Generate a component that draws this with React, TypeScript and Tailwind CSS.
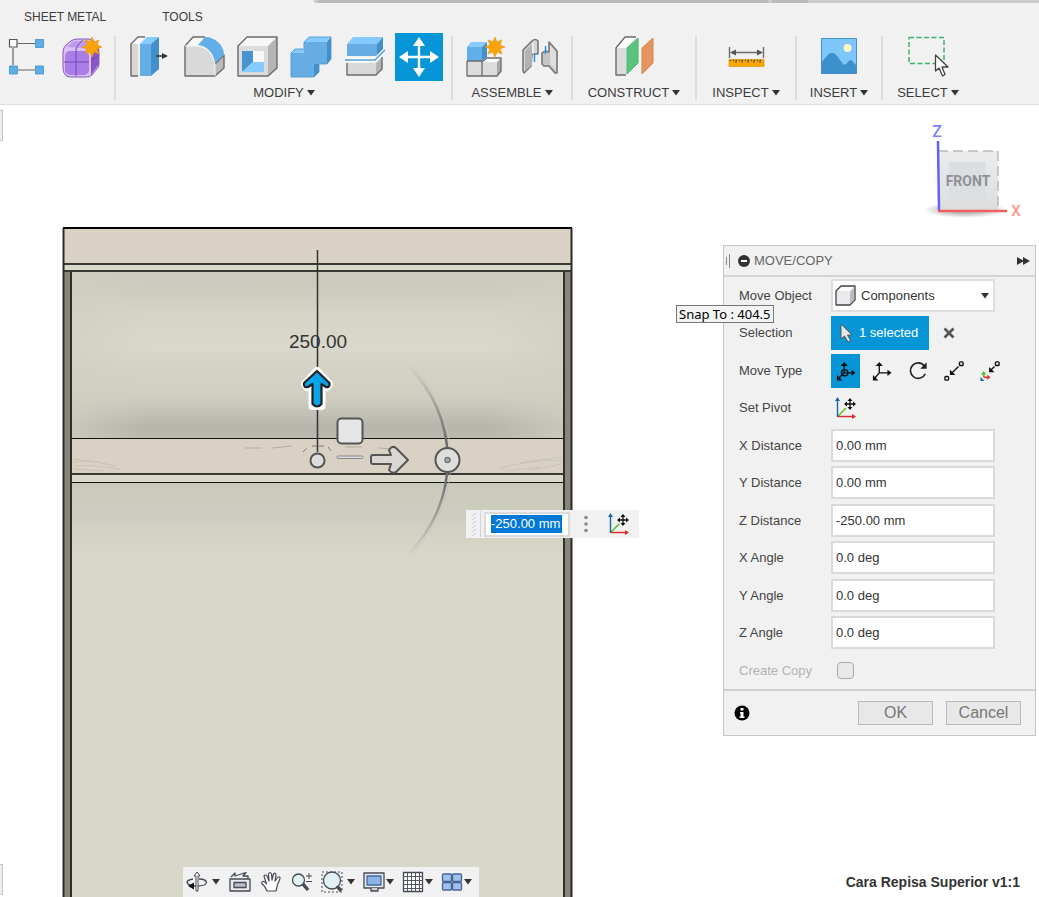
import type { ReactNode } from 'react'

const GREY = '#6b6b6b'

function Tool({ label, active, children }: { label: string; active?: boolean; children: ReactNode }) {
  return (
    <button
      type="button"
      aria-label={label}
      className={active ? 'size-12 bg-[#0696d7]' : 'size-12'}
    >
      <svg viewBox="0 0 48 48" className="size-12" fill="none" strokeLinejoin="round">
        {children}
      </svg>
    </button>
  )
}

function Caret() {
  return (
    <svg viewBox="0 0 8 6" className="h-[6px] w-2 shrink-0" fill="#333">
      <path d="M0 0H8L4 5.5Z" />
    </svg>
  )
}

function Star() {
  return (
    <path
      d="M34 4L36 9L41 7L39 12L44 14L39 16L41 21L36 19L34 24L32 19L27 21L29 16L24 14L29 12L27 7L32 9Z"
      fill="#f9a30a"
      stroke="#e8920a"
      strokeWidth=".6"
    />
  )
}

function Group({ label, className, children }: { label?: string; className: string; children: ReactNode }) {
  return (
    <section className={`flex shrink-0 flex-col gap-1 ${className}`}>
      <div className="flex gap-[6px]">{children}</div>
      {label && (
        <button type="button" className="flex h-4 items-center gap-[3px] text-[13px] leading-4">
          {label}
          <Caret />
        </button>
      )}
    </section>
  )
}

function Divider() {
  return <div className="mt-[3px] h-16 w-[2px] shrink-0 bg-[#dcdcdc]" />
}

function Toolbar() {
  return (
    <header className="shrink-0 border-b border-[#dedede] bg-[#f1f1f1] text-[#3c3c3c]">
      <div className="ml-[314px] flex h-[3px] bg-[#cbcbcb]">
        <div className="ml-1 w-[450px] bg-[#b9b9b9]" />
        <div className="ml-1 w-9 bg-[#b9b9b9]" />
      </div>
      <nav className="flex h-7 items-center gap-14 pl-6 text-[12px]">
        <a href="#sheet-metal">SHEET METAL</a>
        <a href="#tools">TOOLS</a>
      </nav>
      <div className="flex overflow-hidden pt-[2px] pb-[3px]">
        <Group className="w-[114px] items-start pl-[2px]">
          <Tool label="Pattern">
            <path d="M16 10.500H33M11 15V32M16 37H33" stroke="#666" strokeWidth="1.200" />
            <rect x="7.500" y="6.500" width="7.500" height="7.500" fill="#fff" stroke="#555" strokeWidth="1.200" />
            <g fill="#5eaee8" stroke="#3d8fce" strokeWidth=".8">
              <rect x="33.500" y="6.500" width="8" height="8" />
              <rect x="7.500" y="33" width="8" height="8" />
              <rect x="33.500" y="33" width="8" height="8" />
            </g>
          </Tool>
          <Tool label="Create form">
            <path d="M7 19Q7 15 10 12L15 8Q17 6 22 6H33Q43 8 43 20V31Q43 34 40 37L36 42Q34 44 30 44H14Q7 43 7 35Z" fill="#d9c0f5" stroke="#8558bd" />
            <path d="M35 19L43 12V31L35 42Z" fill="#8a55c4" />
            <rect x="9" y="18" width="24" height="24" rx="5" fill="#aa7de8" />
            <path d="M11 14L18 8H33L28 15Z" fill="#bf98f0" />
            <path d="M8 29H33L43 22M20 43V17Q20 13 27 7" stroke="#7346ad" />
            <path d="M34 18V42" stroke="#d9c0f5" strokeWidth="2" />
            <g transform="translate(2 0)">
              <Star />
            </g>
          </Tool>
        </Group>
        <Divider />
        <Group label="MODIFY" className="items-center pr-2 pl-[9px]">
          <Tool label="Press pull">
            <path d="M6 11L13 4H19L13 11Z" fill="#fff" />
            <rect x="6" y="11" width="7" height="32" fill="#d7d7d7" />
            <path d="M13 43H6V11L13 4H20" stroke={GREY} strokeWidth="1.400" />
            <path d="M15 11H26V43H15Z" fill="#64aee5" />
            <path d="M15 11L22 4H34L26 11Z" fill="#86cbff" />
            <path d="M26 11L34 4V36L26 43Z" fill="#4390cc" />
            <path d="M31 23H38" stroke="#333" strokeWidth="1.500" />
            <path d="M37 20L43 23L37 26Z" fill="#333" />
          </Tool>
          <Tool label="Fillet">
            <path d="M6 13L14 4H26L19 13Z" fill="#f7f7f7" />
            <path d="M6 13H18C28 14 35 22 36 32V43H6Z" fill="#d9d9d9" />
            <path d="M36 31L45 22V35L36 43Z" fill="#bbb" />
            <path d="M26 4H14L6 13V43H36L45 35V22L36 31" stroke={GREY} strokeWidth="1.400" />
            <path d="M6 13H18C28 14 35 22 36 32V43" stroke="#f4f4f4" strokeWidth="1" />
            <path d="M19 12L26 4C36 4 45 12 45 22L36 30C35 20 28 13 19 12Z" fill="#62aee8" />
          </Tool>
          <Tool label="Shell">
            <path d="M5 13L14 4H44L35 13Z" fill="#f7f7f7" />
            <path d="M5 13H35V43H5Z" fill="#dcdcdc" />
            <path d="M35 13L44 4V35L35 43Z" fill="#b5b5b5" />
            <path d="M5 13L14 4H44V35L35 43H5Z" stroke={GREY} strokeWidth="1.400" />
            <rect x="9" y="18" width="22" height="21" fill="#f7f7f7" />
            <path d="M9 18H20V29L9 39Z" fill="#4595d0" />
            <path d="M9 39L20 29H31V39Z" fill="#86cbff" />
          </Tool>
          <Tool label="Combine">
            <path d="M4 20H17V9H40V31H27V44H4Z" fill="#65ade3" />
            <path d="M17 9L22 4H44L40 9ZM4 20L8 16H17V20Z" fill="#86cbff" />
            <path d="M40 9L44 4V26L40 31ZM27 31H32V39L27 44Z" fill="#438fc9" />
            <path d="M4 20L8 16H17V9L22 4H44V26L40 31H32V39L27 44H4Z" stroke="#4794cf" strokeWidth=".8" />
          </Tool>
          <Tool label="Split body">
            <path d="M6 11H36V23H6Z" fill="#65ade3" />
            <path d="M6 11L12 4H42L36 11Z" fill="#86cbff" />
            <path d="M36 11L42 4V17L36 23Z" fill="#438fc9" />
            <path d="M6 30H35V42H6Z" fill="#d9d9d9" />
            <path d="M35 30L41 24V36L35 42Z" fill="#b5b5b5" />
            <path d="M6 30V42H35L41 36V24" stroke={GREY} strokeWidth="1.400" />
            <path d="M4 27H34L44 17" stroke="#fff" strokeWidth="4" />
            <path d="M4 27H34L44 17" stroke="#4f9edb" strokeWidth="1.600" />
          </Tool>
          <Tool label="Move/Copy" active>
            <path d="M24 10V38M10 24H38" stroke="#fff" strokeWidth="2.400" />
            <path d="M24 4L30 13H18ZM24 44L18 35H30ZM4 24L13 18V30ZM44 24L35 30V18Z" fill="#fff" />
          </Tool>
        </Group>
        <Divider />
        <Group label="ASSEMBLE" className="w-[118px] items-center">
          <Tool label="New component">
            <path d="M6 14H21V28H6Z" fill="#62aee8" />
            <path d="M6 14L10 9H26L21 14Z" fill="#86cbff" />
            <path d="M21 14L26 9V24L21 28Z" fill="#438fc9" />
            <path d="M6 28H36V43H6Z" fill="#dcdcdc" />
            <path d="M21 29L26 25H40L36 29Z" fill="#fff" />
            <path d="M36 29L40 25V38L36 43Z" fill="#aaa" />
            <path d="M6 28V43H36L40 38V25H26L21 29V43M6 28H21" stroke={GREY} strokeWidth="1.300" />
            <path d="M34 4L38 7L44 14L38 21L34 24L30 21L26 14L30 7Z" fill="#f1f1f1" stroke="#f1f1f1" />
            <Star />
          </Tool>
          <Tool label="Joint">
            <path d="M8 17L17 8Q20 5 23 8V21H17L16 33L9 40L8 38Z" fill="#d4d4d4" stroke="#777" strokeWidth="1.600" />
            <path d="M10 18L17 11V32L10 38Z" fill="#b2b2b2" />
            <path d="M18 10V21" stroke="#fff" />
            <path d="M34 9L42 18V40L40 40L34 33H29L27 31V20Q30 17 34 19Z" fill="#c6c6c6" stroke="#777" strokeWidth="1.600" />
            <path d="M35 12L41 19V37L35 31Z" fill="#dedede" />
            <path d="M19.500 21V29M30.500 13V21" stroke="#178fe0" strokeWidth="1.400" />
          </Tool>
        </Group>
        <Divider />
        <Group label="CONSTRUCT" className="w-[122px] items-center">
          <Tool label="Offset plane">
            <path d="M6 15L15 4H26L16 15Z" fill="#fff" />
            <path d="M6 15H16V42H6Z" fill="#dcdcdc" />
            <path d="M16 42H6V15L15 4H26" stroke={GREY} strokeWidth="1.400" />
            <path d="M17 15L28 5V30L17 41Z" fill="#5bc47c" stroke="#44b369" />
            <path d="M32 15L43 5V30L32 41Z" fill="#e59660" stroke="#d98347" />
          </Tool>
        </Group>
        <Divider />
        <Group label="INSPECT" className="w-[98px] items-center">
          <Tool label="Measure">
            <path d="M7.500 14V25M41.500 14V25M10 19.500H39" stroke={GREY} strokeWidth="1.400" />
            <path d="M8 19.500L14 16.500V22.500ZM41 19.500L35 16.500V22.500Z" fill="#555" />
            <rect x="7" y="26.500" width="35" height="7" fill="#f9a602" stroke="#e29a10" strokeWidth=".8" />
            <path d="M8 27.500H41" stroke="#5c4a20" strokeWidth="1.600" strokeDasharray="1 2" />
            <path d="M14 27V30M20 27V30M26 27V30M32 27V30M38 27V30" stroke="#5c4a20" />
          </Tool>
        </Group>
        <Divider />
        <Group label="INSERT" className="w-[84px] items-center">
          <Tool label="Insert image">
            <rect x="6" y="5" width="36" height="36" fill="#7fc7fb" />
            <path d="M6 29Q9 27 11 24Q17 16 22 23L28 31Q30 33 32 30Q36 24 39 30L42 33V41H6Z" fill="#3d90cc" />
            <rect x="6.500" y="5.500" width="35" height="35" stroke="#4191cc" />
            <circle cx="32.500" cy="15" r="4" fill="#fff7c4" />
          </Tool>
        </Group>
        <Divider />
        <Group label="SELECT" className="w-[90px] items-center">
          <Tool label="Select window">
            <rect x="5" y="4.500" width="35" height="26" stroke="#3bb46b" strokeWidth="1.500" strokeDasharray="5 2.500" />
            <path d="M31.500 22V38L35 35L38.500 43L41 41.500L38 34H44Z" fill="#fff" stroke="#444" strokeWidth="1.300" />
          </Tool>
        </Group>
      </div>
    </header>
  )
}

// Cabinet front with the move manipulator. Coordinates count from the window's top edge.
function Model() {
  return (
    <svg className="block h-full w-full" fill="none">
      <defs>
        <linearGradient id="back" x1="0" y1="272" x2="0" y2="438" gradientUnits="userSpaceOnUse">
          <stop offset="0" stopColor="#cac9bd" />
          <stop offset=".14" stopColor="#cecdc0" />
          <stop offset=".25" stopColor="#d5d4c7" />
          <stop offset=".45" stopColor="#d9d8ca" />
          <stop offset=".6" stopColor="#d3d2c5" />
          <stop offset=".75" stopColor="#cfcec1" />
          <stop offset=".86" stopColor="#c2c0b5" />
          <stop offset=".93" stopColor="#b7b4ac" />
          <stop offset="1" stopColor="#bbb8af" />
        </linearGradient>
        <linearGradient id="door" x1="0" y1="482" x2="0" y2="562" gradientUnits="userSpaceOnUse">
          <stop offset="0" stopColor="#c9c9bb" />
          <stop offset=".4" stopColor="#cdccc0" />
          <stop offset=".7" stopColor="#d4d3c6" />
          <stop offset="1" stopColor="#d9d7ca" />
        </linearGradient>
        <linearGradient id="edges" x1="72" y1="0" x2="563" y2="0" gradientUnits="userSpaceOnUse">
          <stop offset="0" stopColor="#d0cfc2" stopOpacity=".7" />
          <stop offset=".15" stopColor="#d0cfc2" stopOpacity="0" />
          <stop offset=".85" stopColor="#d0cfc2" stopOpacity="0" />
          <stop offset="1" stopColor="#d0cfc2" stopOpacity=".7" />
        </linearGradient>
        <linearGradient id="arc" x1="0" y1="365" x2="0" y2="556" gradientUnits="userSpaceOnUse">
          <stop offset="0" stopColor="#888" stopOpacity="0" />
          <stop offset=".4" stopColor="#6c6c6c" />
          <stop offset=".6" stopColor="#6c6c6c" />
          <stop offset="1" stopColor="#888" stopOpacity="0" />
        </linearGradient>
      </defs>
      <g transform="translate(0 -105)">
        <rect x="63" y="228" width="509" height="1200" fill="#88857a" />
        <rect x="63" y="228" width="509" height="36" fill="#dad3c5" />
        <rect x="63" y="265" width="509" height="6" fill="#d8dacb" />
        <rect x="72" y="272" width="492" height="167" fill="url(#back)" />
        <rect x="72" y="272" width="492" height="167" fill="url(#edges)" />
        <rect x="72" y="439" width="492" height="35" fill="#d9d2c4" />
        <rect x="72" y="475" width="492" height="7" fill="#d9dacb" />
        <rect x="72" y="483" width="492" height="1000" fill="url(#door)" />
        <path
          d="M73 462Q90 459 115 466M75 466Q96 464 122 470M73 459L100 462M73 469L104 471M500 468Q530 460 562 460M520 463L562 457M530 470L562 464M505 471L540 467"
          stroke="#c9c4b4"
        />
        <path d="M245 448H262M272 448L292 446M345 447H362M378 448L392 449" stroke="#b3ae9f" />
        <path d="M63 228H572" stroke="#000" strokeWidth="2" />
        <path d="M63 264H572M63 271H572M72 474H564" stroke="#3a3a34" strokeWidth="2" />
        <path d="M72 438.500H564M72 482.500H564" stroke="#111" />
        <path d="M63.500 228V1500M571.500 228V1500" stroke="#2b2b29" strokeWidth="2" />
        <path d="M71 271V1500M564 271V1500" stroke="#30302b" strokeWidth="2" />

        <path d="M317.500 250V452" stroke="#333" strokeWidth="1.500" />
        <text x="318" y="348" textAnchor="middle" fontSize="19" fill="#333" fontFamily="Liberation Sans, sans-serif">250.00</text>
        <path d="M408 366A131 131 0 0 1 408 554" stroke="url(#arc)" strokeWidth="2.500" />
        <path d="M411 366A131 131 0 0 1 411 554" stroke="#c3c2bb" strokeWidth="1" strokeOpacity=".7" />
        <g strokeLinejoin="round" strokeLinecap="round">
          <path d="M317 371L329 384L327 387L321.500 384V406H312.500V384L307 387L305 384Z" stroke="#fff" strokeWidth="8" fill="#fff" />
          <path d="M317 371L329.500 383Q330 388 326 387L321.500 384V404Q317 409 312.500 404V384L308 387Q303 388 304 383Z" fill="#06a4ea" stroke="#222" strokeWidth="2.200" />
          <rect x="337.500" y="418.500" width="25" height="25" rx="4" fill="#e5e6e8" stroke="#555" strokeWidth="2" />
          <path d="M371 457Q371 455 373 455H391L389 450Q392 445 396 448L408 460L396 472Q392 474 389 470L391 464H373Q371 464 371 462Z" fill="#d8d7d4" stroke="#555" strokeWidth="2" />
        </g>
        <rect x="337" y="456" width="26" height="2.500" rx="1" fill="#ddd" stroke="#777" strokeWidth=".8" />
        <path d="M303 452L308 447M312 446H324M328 447L332 452" stroke="#777" strokeDasharray="5 2" />
        <circle cx="317.500" cy="460.500" r="7" fill="#ddd" stroke="#555" strokeWidth="2" />
        <circle cx="447.500" cy="460" r="12" fill="#dededd" stroke="#555" strokeWidth="2" />
        <circle cx="447.500" cy="460" r="2.500" fill="#aaa" stroke="#777" strokeWidth="1.500" />
      </g>
    </svg>
  )
}

function ViewCube() {
  return (
    <svg viewBox="0 0 120 110" className="absolute top-[15px] right-0 h-[110px] w-[120px]">
      <defs>
        <linearGradient id="cube" x1="0" y1="0" x2="0" y2="1">
          <stop offset="0" stopColor="#ececec" />
          <stop offset="1" stopColor="#dcdddd" />
        </linearGradient>
        <radialGradient id="shade">
          <stop offset=".4" stopColor="#bbb" />
          <stop offset="1" stopColor="#bbb" stopOpacity="0" />
        </radialGradient>
      </defs>
      <ellipse cx="46" cy="90" rx="42" ry="8" fill="url(#shade)" />
      <rect x="19" y="31" width="60" height="60" fill="url(#cube)" />
      <rect x="30" y="42" width="37" height="37" fill="#dcdfe2" />
      <path d="M19 31H79V91" fill="none" stroke="#b9b9b9" strokeWidth="1.500" strokeDasharray="10 5" />
      <path d="M19 21L20 91" stroke="#6262f5" strokeWidth="2.500" />
      <path d="M19 91H88" stroke="#f06062" strokeWidth="2.500" />
      <g fontFamily="Roboto, sans-serif" fontWeight="700" textAnchor="middle" fontSize="14">
        <text x="49" y="66" fill="#8d9196">FRONT</text>
        <text x="18" y="17" fill="#8080ff" fontSize="16" fontWeight="500">Z</text>
        <text x="97" y="96" fill="#ff9393" fontSize="15" fontWeight="500">X</text>
      </g>
    </svg>
  )
}

function PivotIcon() {
  return (
    <svg viewBox="0 0 22 22" className="size-[22px]" fill="none">
      <path d="M3 19L11 11" stroke="#53c62d" strokeWidth="1.600" />
      <path d="M2.500 20V3" stroke="#1766b0" strokeWidth="1.400" />
      <path d="M2.500 0L5 4H0Z" fill="#1766b0" />
      <path d="M3 19.500H18" stroke="#e02828" strokeWidth="1.400" />
      <path d="M21 19.500L17 17V22Z" fill="#e02828" />
      <path d="M15 3V11M11 7H19" stroke="#111" strokeWidth="1.300" />
      <path d="M15 1L17.500 4H12.500ZM15 13L12.500 10H17.500ZM9 7L12 4.500V9.500ZM21 7L18 9.500V4.500Z" fill="#111" />
    </svg>
  )
}

const moveTypes = [
  {
    label: 'Free move',
    icon: (
      <>
        <path d="M9 13V4M9 13H18M9 13L3 19M6 13A3.500 3.500 0 1 0 13 13A3.500 3.500 0 1 0 6 13" stroke="#111" strokeWidth="1.500" />
        <path d="M9 1L13 5.500H5ZM21.500 13L17 9.500V16.500ZM1 21.500V15.500L7 21.500Z" fill="#111" />
      </>
    ),
  },
  {
    label: 'Translate',
    icon: (
      <>
        <path d="M8 13V4M8 13H18M8 13L3 19" stroke="#111" strokeWidth="1.500" />
        <path d="M8 1L12 5.500H4ZM21.500 13L17 9.500V16.500ZM1 21.500V15.500L7 21.500Z" fill="#111" />
      </>
    ),
  },
  {
    label: 'Rotate',
    icon: (
      <>
        <path d="M18 5.500A8.500 8.500 0 1 0 19 14" stroke="#222" strokeWidth="1.800" />
        <path d="M20.500 1.500V8.500H13.500Z" fill="#222" />
      </>
    ),
  },
  {
    label: 'Point to point',
    icon: (
      <>
        <path d="M16 6L9 13" stroke="#111" strokeWidth="1.500" />
        <path d="M6.500 15.500V9.500L12.500 15.500Z" fill="#111" />
        <rect x="17" y="1" width="4" height="4" rx="1" stroke="#111" strokeWidth="1.500" />
        <rect x="1" y="17" width="4" height="4" rx="1" stroke="#111" strokeWidth="1.500" />
      </>
    ),
  },
  {
    label: 'Point to position',
    icon: (
      <>
        <path d="M16 6L12 10" stroke="#111" strokeWidth="1.500" />
        <path d="M10 12.500V6.500L16 12.500Z" fill="#111" />
        <rect x="17" y="1" width="4" height="4" rx="1" stroke="#111" strokeWidth="1.500" />
        <path d="M4 18V14" stroke="#53c62d" strokeWidth="1.800" />
        <path d="M4 11L7 15H1Z" fill="#53c62d" />
        <path d="M4 18H8" stroke="#e02828" strokeWidth="1.800" />
        <path d="M11.500 18L8 15V21Z" fill="#e02828" />
        <path d="M.5 22V17.500L5 22Z" fill="#1766b0" />
      </>
    ),
  },
]

const fields = [
  { id: 'x-distance', label: 'X Distance', value: '0.00 mm' },
  { id: 'y-distance', label: 'Y Distance', value: '0.00 mm' },
  { id: 'z-distance', label: 'Z Distance', value: '-250.00 mm' },
  { id: 'x-angle', label: 'X Angle', value: '0.0 deg' },
  { id: 'y-angle', label: 'Y Angle', value: '0.0 deg' },
  { id: 'z-angle', label: 'Z Angle', value: '0.0 deg' },
]

function Row({ label, htmlFor, children }: { label: string; htmlFor?: string; children: ReactNode }) {
  return (
    <div className="flex items-center">
      {htmlFor ? (
        <label htmlFor={htmlFor} className="w-[92px] shrink-0">
          {label}
        </label>
      ) : (
        <span className="w-[92px] shrink-0">{label}</span>
      )}
      {children}
    </div>
  )
}

function MoveDialog() {
  return (
    <form className="absolute top-[140px] right-[3px] w-[313px] border border-[#c6c6c6] bg-[#f1f1f1] text-[13px] text-[#444]">
      <div className="flex h-[31px] items-center border-b-2 border-[#d4d4d4] pr-[5px] pl-[2px]">
        <svg viewBox="0 0 4 14" className="h-[14px] w-1" stroke="#888">
          <path d="M.5 3V11M3.500 0V14" />
        </svg>
        <button type="button" aria-label="Collapse" className="ml-2">
          <svg viewBox="0 0 12 12" className="size-3">
            <circle cx="6" cy="6" r="6" fill="#333" />
            <path d="M3 6H9" stroke="#fff" strokeWidth="2" />
          </svg>
        </button>
        <h2 className="ml-1 flex-1 text-[#666]">MOVE/COPY</h2>
        <button type="button" aria-label="Expand">
          <svg viewBox="0 0 13 8" className="h-2 w-[13px]" fill="#333">
            <path d="M0 0L7 4L0 8ZM6 0L13 4L6 8Z" />
          </svg>
        </button>
      </div>
      <div className="grid h-[412px] grid-rows-11 pl-[15px]">
        <Row label="Move Object" htmlFor="move-object">
          <div className="relative">
            <select
              id="move-object"
              className="h-[33px] w-[164px] appearance-none border-2 border-[#dedede] bg-white pl-7 text-[#333]"
            >
              <option>Components</option>
            </select>
            <svg viewBox="0 0 22 22" className="pointer-events-none absolute top-[6px] left-1 size-[22px]" fill="none">
              <path d="M1 6L6 1H20V15L15 20H1Z" fill="#e6e6e8" stroke="#444" strokeWidth="1.300" strokeLinejoin="round" />
              <path d="M2 7H15V19H2Z" fill="#e9eaee" />
              <path d="M15 7L19 3V15L15 19Z" fill="#bcbcc0" />
              <path d="M3 6L7 2H18L15 6Z" fill="#fff" />
            </svg>
            <span className="pointer-events-none absolute top-[14px] right-[6px] flex">
              <Caret />
            </span>
          </div>
        </Row>
        <Row label="Selection">
          <button type="button" className="flex h-[34px] w-[98px] items-center gap-1 bg-[#0696d7] pl-2 text-white">
            <svg viewBox="0 0 16 22" className="h-[22px] w-4">
              <path d="M2 2V17L5.500 14L9 20L11.500 18.500L8.500 13H13Z" fill="#e6e6e6" stroke="#555" />
            </svg>
            1 selected
          </button>
          <button type="button" aria-label="Clear selection" className="ml-[14px]">
            <svg viewBox="0 0 12 12" className="size-3" stroke="#555" strokeWidth="2.600">
              <path d="M1.500 1.500L10.500 10.500M10.500 1.500L1.500 10.500" />
            </svg>
          </button>
        </Row>
        <Row label="Move Type">
          <div className="flex gap-[7px]">
            {moveTypes.map((type, i) => (
              <button
                key={type.label}
                type="button"
                aria-label={type.label}
                className={
                  i === 0
                    ? 'flex h-[34px] w-[29px] items-center justify-center bg-[#0696d7]'
                    : 'flex h-[34px] w-[29px] items-center justify-center'
                }
              >
                <svg viewBox="0 0 22 22" className="size-5" fill="none">
                  {type.icon}
                </svg>
              </button>
            ))}
          </div>
        </Row>
        <Row label="Set Pivot">
          <button type="button" aria-label="Set pivot" className="ml-1">
            <PivotIcon />
          </button>
        </Row>
        {fields.map((field) => (
          <Row key={field.id} label={field.label} htmlFor={field.id}>
            <input
              id={field.id}
              defaultValue={field.value}
              className="h-[33px] w-[164px] border-2 border-[#dadada] bg-white pl-[3px] text-[#333]"
            />
          </Row>
        ))}
        <div className="flex items-center text-[#b3b3b3]">
          <label htmlFor="create-copy" className="w-[98px]">
            Create Copy
          </label>
          <input
            id="create-copy"
            type="checkbox"
            disabled
            className="size-[17px] appearance-none rounded border border-[#aaa] bg-[#e9e9e9]"
          />
        </div>
      </div>
      <div className="flex h-[46px] items-center gap-[13px] border-t-2 border-[#d0d0d0] pr-[14px] pl-[10px]">
        <button type="button" aria-label="Info" className="mr-auto">
          <svg viewBox="0 0 16 16" className="size-4">
            <circle cx="8" cy="8" r="7.500" fill="#000" />
            <path d="M6.500 3H9.500V5.500H6.500ZM6 7H9.500V11.500H10.500V13H5.500V11.500H6.500V8.500H6Z" fill="#fff" />
          </svg>
        </button>
        <button type="button" className="h-6 w-[75px] border border-[#b9b9b9] bg-[#e8e8e8] text-[16px] leading-5 text-[#777]">
          OK
        </button>
        <button type="button" className="h-6 w-[75px] border border-[#b9b9b9] bg-[#e8e8e8] text-[16px] leading-5 text-[#777]">
          Cancel
        </button>
      </div>
      <div
        role="tooltip"
        className="absolute top-[59px] -left-12 border border-[#777] bg-[#f4f4f4] px-[2px] font-['Noto_Sans',sans-serif] text-[13px] leading-4 whitespace-nowrap text-black"
      >
        Snap To : 404.5
      </div>
    </form>
  )
}

function ValueBox() {
  return (
    <div className="absolute top-[405px] left-[466px] flex h-7 w-[173px] items-center bg-[#f1f1f1]">
      <svg viewBox="0 0 18 28" className="h-7 w-[18px]" stroke="#d2d2d2" fill="none">
        <path d="M6 6L10 3M6 10L10 7M6 14L10 11M6 18L10 15M6 22L10 19M6 26L10 23M14.500 1V27" />
      </svg>
      <div className="flex h-[25px] w-[86px] items-center border-2 border-[#dadada] bg-white pl-[5px]">
        <input
          aria-label="Distance"
          defaultValue="-250.00 mm"
          className="h-[18px] w-[71px] bg-[#0078d7] text-[13px] text-white"
        />
      </div>
      <button type="button" aria-label="More" className="ml-[14px]">
        <svg viewBox="0 0 4 18" className="h-[18px] w-1" fill="#888">
          <circle cx="2" cy="2.500" r="1.800" />
          <circle cx="2" cy="9" r="1.800" />
          <circle cx="2" cy="15.500" r="1.800" />
        </svg>
      </button>
      <button type="button" aria-label="Set pivot" className="ml-5">
        <PivotIcon />
      </button>
    </div>
  )
}

function NavButton({ label, menu, children }: { label: string; menu?: string; children: ReactNode }) {
  return (
    <button
      type="button"
      aria-label={label}
      className={menu ? `flex items-center ${menu}` : 'flex w-[23px] items-center justify-center'}
    >
      <svg viewBox="0 0 22 22" className="size-[22px]" fill="none" stroke="#454b54" strokeWidth="1.300" strokeLinejoin="round">
        {children}
      </svg>
      {menu && <Caret />}
    </button>
  )
}

function NavBar() {
  return (
    <div className="absolute bottom-0 left-[183px] flex h-[30px] w-[296px] items-center gap-2 bg-[#f1f1f1] pl-[3px]">
      <NavButton label="Orbit" menu="gap-1">
        <path d="M7 8Q1 9 1 11.500Q2 15 11 15Q20 15 20.500 11.500Q20 8 13 8" />
        <path d="M10 20V5H8L11 1L14 5H12V20Z" fill="#fff" strokeWidth="1" />
        <path d="M2 15L8 11.500V18.500Z" fill="#111" stroke="none" />
      </NavButton>
      <NavButton label="Look at">
        <path d="M1 8H21V20H1Z" fill="#e9eaec" />
        <rect x="5" y="11.500" width="12" height="5" fill="#bbc" />
        <path d="M2 6L6 2V5L17 1.500L14 5H19V8" />
      </NavButton>
      <NavButton label="Pan">
        <path
          d="M7 20Q5 15 1.500 12Q2 9.500 5 11L6.500 13L4 5Q5 3 7 5L9 10L8.500 3Q10 0 11.500 3L12 9L13.500 3Q15.500 1 16 4L15 10L18 6Q20.500 5.500 20 7.500Q17 14 16 20Z"
          fill="#fff"
          strokeWidth="1.200"
        />
      </NavButton>
      <NavButton label="Zoom">
        <circle cx="7.500" cy="9" r="6" fill="#e3f3f5" />
        <path d="M12 13L17 19" strokeWidth="3.500" />
        <path d="M15 5H21M18 2V8M15 10.500H21" strokeWidth="1" />
      </NavButton>
      <NavButton label="Zoom window" menu="gap-1">
        <rect x="1" y="1" width="20" height="20" strokeDasharray="2 2" strokeWidth="1" />
        <circle cx="11" cy="9.500" r="8.500" fill="#e0f2f3" />
        <path d="M16 15L20 20" strokeWidth="3.500" />
      </NavButton>
      <NavButton label="Display settings" menu="gap-px">
        <rect x="1" y="2" width="20" height="15" fill="#e9eaec" />
        <rect x="4" y="5" width="14" height="9" fill="#8db4e3" stroke="#3f69a5" />
        <path d="M8 17V20H15V17" fill="#ccc" />
      </NavButton>
      <NavButton label="Grid" menu="gap-px">
        <rect x="1.500" y="1.500" width="19" height="19" fill="#fff" />
        <path d="M5.500 1V21M9.500 1V21M13.500 1V21M17.500 1V21M1 5.500H21M1 9.500H21M1 13.500H21M1 17.500H21" strokeWidth=".9" />
      </NavButton>
      <NavButton label="Viewports" menu="gap-px">
        <g fill="#9fc0e8" stroke="#44659a">
          <rect x="1.500" y="3" width="9" height="7.500" rx="1" />
          <rect x="11.500" y="3" width="9" height="7.500" rx="1" />
          <rect x="1.500" y="11.500" width="9" height="7.500" rx="1" />
          <rect x="11.500" y="11.500" width="9" height="7.500" rx="1" />
        </g>
      </NavButton>
    </div>
  )
}

export default function App() {
  return (
    <div className="flex h-screen flex-col overflow-hidden bg-white font-['Liberation_Sans',Arial,sans-serif]">
      <Toolbar />
      <main className="relative min-h-0 flex-1">
        <Model />
        <div className="absolute top-[5px] left-0 h-[31px] w-[3px] border border-l-0 border-[#c4c4c4] bg-[#eee]" />
        <div className="absolute bottom-[2px] left-0 h-[31px] w-[3px] border border-l-0 border-[#c4c4c4] bg-[#eee]" />
        <ViewCube />
        <ValueBox />
        <MoveDialog />
        <NavBar />
        <p className="absolute right-[19px] bottom-[7px] text-[14px] leading-4 font-bold text-[#333]">
          Cara Repisa Superior v1:1
        </p>
      </main>
    </div>
  )
}
